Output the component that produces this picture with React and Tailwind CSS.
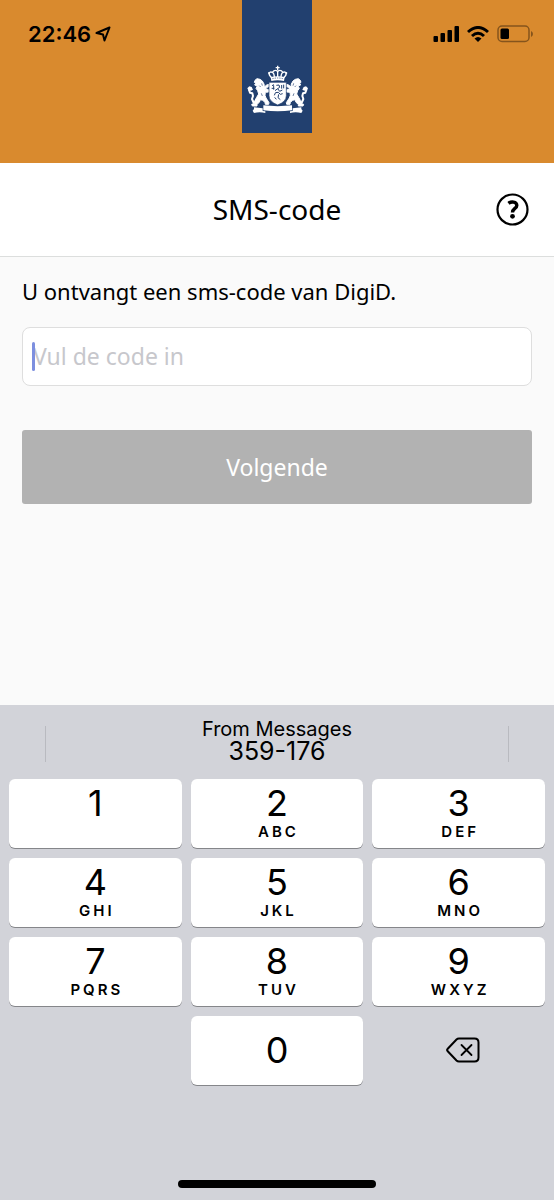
import { useState } from "react";

const KEYS = [
  { digit: "1", letters: "" },
  { digit: "2", letters: "ABC" },
  { digit: "3", letters: "DEF" },
  { digit: "4", letters: "GHI" },
  { digit: "5", letters: "JKL" },
  { digit: "6", letters: "MNO" },
  { digit: "7", letters: "PQRS" },
  { digit: "8", letters: "TUV" },
  { digit: "9", letters: "WXYZ" },
];

// One lion with its claws on the shield; the right one is the same, mirrored
function Lion() {
  return (
    <g>
      <path
        d="M62 92 L68 87 L77 89 L84 94 L89 103 L90 112 L97 106 L104 104 L105 110 L98 113 L93 120 L100 119 L105 122 L103 127 L93 128 L92 137 L95 145 L99 151 L104 159 L103 164 L93 164 L92 158 L85 152 L78 150 L75 158 L68 164 L68 169 L54 169 L52 164 L60 161 L62 152 L67 143 L73 133 L70 123 L65 116 L69 109 L61 106 L64 101 L60 98 Z"
        stroke="currentColor"
        strokeWidth="3"
        strokeLinejoin="round"
      />
      <path
        d="M68 159 L57 157 L53 148 L56 139 L54 131 L47 129 L44 121 L47 115"
        fill="none"
        stroke="currentColor"
        strokeWidth="6"
        strokeLinejoin="round"
      />
      <path d="M39 116 L45 110 L52 112 L56 120 L50 123 L42 122 Z" />
      <path
        d="M75 108 L79 112 M82 101 L84 108 M81 131 L84 139"
        fill="none"
        stroke="#22406f"
        strokeWidth="2"
      />
    </g>
  );
}

function CoatOfArms() {
  return (
    <svg viewBox="38 46 183 153" className="h-[51px] w-[61px] text-white" fill="currentColor" role="img" aria-label="Rijksoverheid">
      {/* crown */}
      <path d="M128 48 h4 v4 h4 v4 h-4 v6 h-4 v-6 h-4 v-4 h4 Z" />
      <path
        d="M112 84 C99 73 105 64 114 68 C118 70 120 75 120 84 M148 84 C161 73 155 64 146 68 C142 70 140 75 140 84 M130 84 V63 M114 68 C120 60 128 61 130 67 C132 61 140 60 146 68"
        fill="none"
        stroke="currentColor"
        strokeWidth="4"
      />
      <circle cx="104" cy="70" r="3" />
      <circle cx="156" cy="70" r="3" />
      <path d="M109 82 Q130 77 151 82 L149 94 Q130 89 111 94 Z" />
      <path d="M114 87 Q130 83 146 87" fill="none" stroke="#22406f" strokeWidth="2" strokeDasharray="4 3" />

      <Lion />
      <g transform="matrix(-1 0 0 1 260 0)">
        <Lion />
      </g>

      {/* shield with the small lion on it */}
      <path d="M104 98 H156 V138 Q156 156 130 166 Q104 156 104 138 Z" stroke="#22406f" strokeWidth="2" />
      <path
        d="M113 108 L119 105 M112 116 H120 M118 107 V120 M142 106 V117 M148 105 V116 M126 107 L134 106 L136 113 L130 117 L122 123 M130 117 L136 125 L144 121 M123 129 L132 128 L138 134 L145 132 M123 130 L120 137 M133 134 L131 144 L138 150 M121 143 L126 149"
        fill="none"
        stroke="#22406f"
        strokeWidth="3"
      />

      {/* ribbon */}
      <path d="M87 167 Q130 172 173 167 V182 Q130 188 87 182 Z" />
      <path d="M85 176 L59 173 V178 L55 183 L59 190 Q76 186 93 190 V185 L85 184 Z" />
      <path d="M175 176 L201 173 V178 L205 183 L201 190 Q184 186 167 190 V185 L175 184 Z" />
    </svg>
  );
}

function StatusIcons() {
  return (
    <div className="flex items-center gap-2 text-black">
      <svg viewBox="0 0 26 16" className="h-4 w-[26px]" fill="currentColor" aria-hidden="true">
        <rect x="0.500" y="10" width="4.500" height="6" rx="1" />
        <rect x="7.500" y="7" width="4.500" height="9" rx="1" />
        <rect x="14.500" y="4" width="4.500" height="12" rx="1" />
        <rect x="21.500" y="0" width="4.500" height="16" rx="1" />
      </svg>
      <svg viewBox="0 0 22 16" className="h-4 w-[22px]" aria-hidden="true">
        <g fill="none" stroke="currentColor" strokeWidth="3">
          <path d="M1 6 Q11 -3 21 6" />
          <path d="M5 10 Q11 4.500 17 10" />
        </g>
        <path d="M11 16 L7.500 12.500 Q11 9.500 14.500 12.500 Z" fill="currentColor" />
      </svg>
      <svg viewBox="0 0 36 18" className="h-[18px] w-9" aria-hidden="true">
        <rect x="1" y="1" width="31" height="15.500" rx="4" fill="none" stroke="#85541c" strokeWidth="1.500" />
        <rect x="3.500" y="3.500" width="8.500" height="10.500" rx="1.500" fill="currentColor" />
        <path d="M34 6 Q36 7 36 9 Q36 11 34 12 Z" fill="#85541c" />
      </svg>
    </div>
  );
}

function Header() {
  return (
    <header className="grid grid-cols-[1fr_70px_1fr] h-[163px] bg-[#d98a2e]">
      <div className="flex items-center gap-2 h-[68px] pl-7 text-black">
        <span className="text-[22px] leading-7 font-semibold">22:46</span>
        <svg viewBox="0 0 16 16" className="size-4 -ml-1" fill="none" aria-hidden="true">
          <path d="M14.500 1.500 L1.500 7 L8 8.500 L9.500 14.500 Z" stroke="currentColor" strokeWidth="2" strokeLinejoin="round" />
        </svg>
      </div>
      <div className="flex items-end justify-center h-[133px] pb-[17px] bg-[#22406f]">
        <CoatOfArms />
      </div>
      <div className="flex items-center justify-end h-[68px] pr-[21px]">
        <StatusIcons />
      </div>
    </header>
  );
}

function Key({ digit, letters, onPress }) {
  return (
    <button
      type="button"
      onClick={() => onPress(digit)}
      className="flex flex-col items-center h-[69px] pt-[6px] rounded-md bg-white shadow-[0_1px_0_#85868a]"
    >
      <span className="text-[36px] leading-9">{digit}</span>
      {letters && <span className="pt-px pl-[3px] text-[15px] leading-5 font-semibold tracking-[3px]">{letters}</span>}
    </button>
  );
}

function Keyboard({ onPress, onDelete, onFill }) {
  return (
    <section aria-label="Toetsenbord" className="bg-[#d2d3d9] text-black">
      <div className="flex items-center justify-between h-[74px] px-[45px] pt-1">
        <div className="w-px h-9 bg-[#b9bac0]" />
        <button type="button" onClick={onFill} className="flex flex-col items-center pb-2">
          <span className="text-[20px] leading-[22px]">From Messages</span>
          <span className="text-[25px] leading-[22px]">359-176</span>
        </button>
        <div className="w-px h-9 bg-[#b9bac0]" />
      </div>

      <div className="grid grid-cols-3 gap-x-[9px] gap-y-[10px] px-[9px]">
        {KEYS.map((key) => (
          <Key key={key.digit} digit={key.digit} letters={key.letters} onPress={onPress} />
        ))}
        <button
          type="button"
          onClick={() => onPress("0")}
          className="col-start-2 h-[69px] pb-[2px] rounded-md bg-white shadow-[0_1px_0_#85868a] text-[36px] leading-9"
        >
          0
        </button>
        <button type="button" onClick={onDelete} aria-label="Wissen" className="flex items-center justify-center pb-[2px] pl-2">
          <svg viewBox="0 0 34 26" className="w-[34px] h-[26px]" fill="none" stroke="currentColor" strokeLinecap="round" strokeLinejoin="round">
            <path d="M13 1.500 H28.500 Q32.500 1.500 32.500 5.500 V20.500 Q32.500 24.500 28.500 24.500 H13 Q11.500 24.500 10.500 23.500 L1.500 14 Q0.700 13 1.500 12 L10.500 2.500 Q11.500 1.500 13 1.500 Z" strokeWidth="2" />
            <path d="M15.500 8 L25.500 18 M25.500 8 L15.500 18" strokeWidth="1.800" />
          </svg>
        </button>
      </div>

      <div className="flex justify-center pt-[95px] pb-3">
        <div className="w-[198px] h-2 rounded-full bg-black" />
      </div>
    </section>
  );
}

export default function App() {
  const [code, setCode] = useState("");

  return (
    <div className="flex flex-col min-h-screen bg-[#fafafa] font-['Inter',sans-serif]">
      <Header />

      <div className="grid grid-cols-[1fr_auto_1fr] items-center h-[94px] px-[25px] bg-white border-b border-[#dcdedd] text-black font-['Noto_Sans',sans-serif]">
        <h1 className="col-start-2 pb-[2px] text-[28px] leading-9">SMS-code</h1>
        <button type="button" aria-label="Help" className="justify-self-end">
          <svg viewBox="0 0 33 33" className="size-[33px]" fill="none" stroke="currentColor">
            <circle cx="16.500" cy="16.500" r="15" strokeWidth="2.200" />
            <path d="M12.500 10.300 C15 8.300 20.800 8.300 20.800 12.500 C20.800 15.500 16.500 15.500 16.500 19.500" strokeWidth="3.400" />
            <circle cx="16.500" cy="23.300" r="2.400" fill="currentColor" stroke="none" />
          </svg>
        </button>
      </div>

      <main className="flex-1 px-[22px] pt-[18px] font-['Noto_Sans',sans-serif]">
        <form onSubmit={(e) => e.preventDefault()}>
          <label htmlFor="code" className="block text-[22px] leading-8 text-black">
            U ontvangt een sms-code van DigiD.
          </label>
          <div className="relative mt-5">
            <input
              id="code"
              type="text"
              inputMode="numeric"
              value={code}
              onChange={(e) => setCode(e.target.value)}
              placeholder="Vul de code in"
              className="block w-full h-[59px] px-[10px] pb-[2px] rounded-lg border border-[#dedede] bg-white text-[23px] text-black placeholder:text-[#c7c7cc] outline-none"
            />
            {/* caret */}
            {code === "" && <span className="absolute left-[10px] top-[15px] w-[3px] h-[29px] rounded-full bg-[#7d8fdf]" />}
          </div>
          <button type="submit" className="block w-full h-[74px] mt-11 rounded-[3px] bg-[#b2b2b2] text-[23px] leading-8 text-white">
            Volgende
          </button>
        </form>
      </main>

      <Keyboard
        onPress={(digit) => setCode(code + digit)}
        onDelete={() => setCode(code.slice(0, -1))}
        onFill={() => setCode("359176")}
      />
    </div>
  );
}
